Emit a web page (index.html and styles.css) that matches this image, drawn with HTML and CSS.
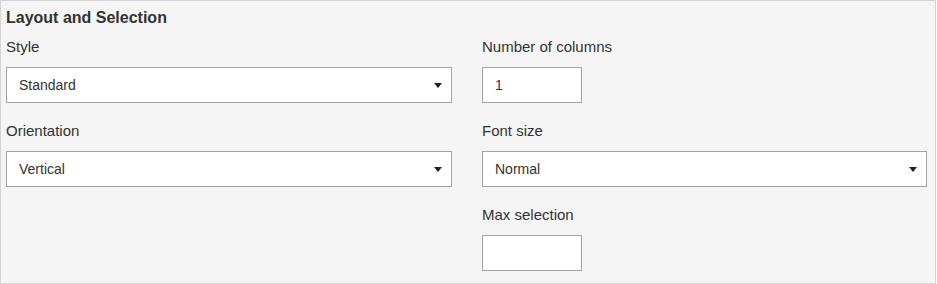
FILE: index.html
```html
<!DOCTYPE html>
<html lang="en">
  <head>
    <meta charset="UTF-8" />
    <title>Layout and Selection</title>
    <link rel="stylesheet" href="styles.css">
  </head>
  <body>
    <div class="panel">
      <h2 class="panel-title">Layout and Selection</h2>

      <div class="grid">
        <div class="field">
          <label for="style">Style</label>
          <div class="select">
            <span>Standard</span>
            <span class="caret"></span>
          </div>
        </div>

        <div class="field">
          <label for="columns">Number of columns</label>
          <div class="input small">1</div>
        </div>

        <div class="field">
          <label for="orientation">Orientation</label>
          <div class="select">
            <span>Vertical</span>
            <span class="caret"></span>
          </div>
        </div>

        <div class="field">
          <label for="font_size">Font size</label>
          <div class="select">
            <span>Normal</span>
            <span class="caret"></span>
          </div>
        </div>

        <div class="field"></div>

        <div class="field">
          <label for="max_selection">Max selection</label>
          <div class="input small"></div>
        </div>
      </div>
    </div>
  </body>
</html>
```

FILE: styles.css
```css
body {
  font-family: "Liberation Sans", Arial, sans-serif;
  margin: 0;
  padding: 0;
  color: #333;
  background-color: #fff;
}

.panel {
  width: 936px;
  height: 284px;
  box-sizing: border-box;
  background-color: #f5f5f5;
  border: 1px solid #d4d4d4;
  padding-left: 5px;
}

.panel-title {
  font-size: 16px;
  font-weight: bold;
  margin: 0;
  padding-top: 7px;
  line-height: 20px;
}

.grid {
  display: grid;
  grid-template-columns: 446px 445px;
  column-gap: 30px;
  row-gap: 18px;
  margin-top: 9px;
}

.field label {
  display: block;
  font-size: 15px;
  line-height: 20px;
  margin-bottom: 10px;
}

.select,
.input {
  height: 36px;
  box-sizing: border-box;
  background-color: #fff;
  border: 1px solid #a3a3a3;
  font-size: 14px;
  display: flex;
  align-items: center;
  padding: 0 12px;
}

.select {
  justify-content: space-between;
  padding-right: 9px;
}

.input.small {
  width: 100px;
}

.caret {
  width: 0;
  height: 0;
  border-left: 4px solid transparent;
  border-right: 4px solid transparent;
  border-top: 5px solid #222;
}
```
